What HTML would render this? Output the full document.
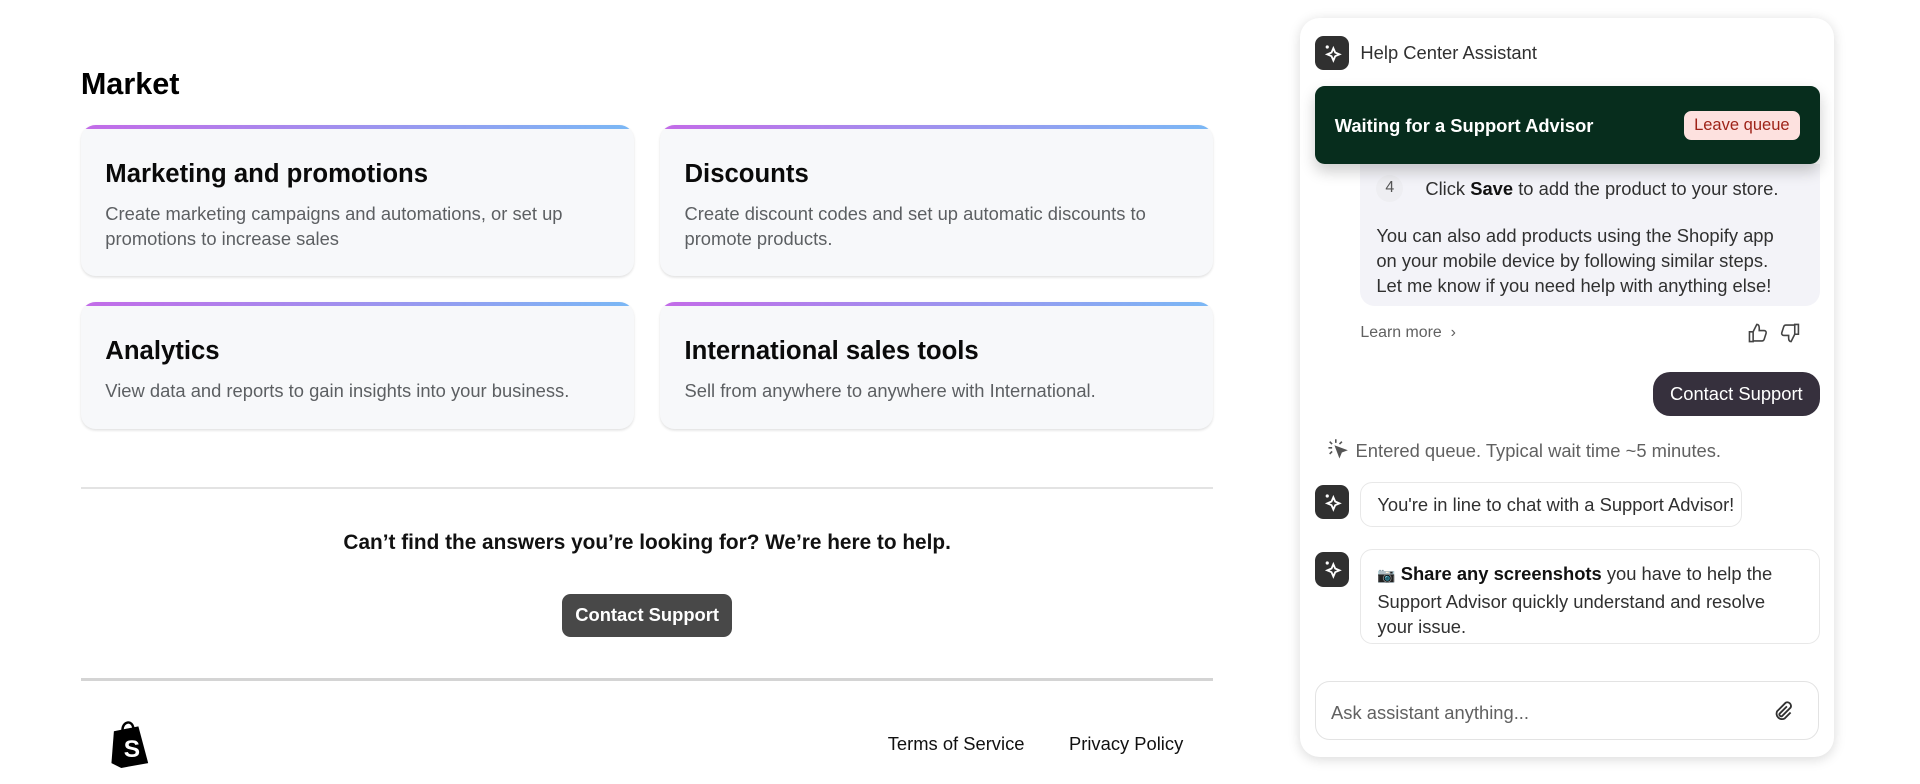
<!DOCTYPE html>
<html><head><meta charset="utf-8"><style>
html,body{margin:0;padding:0;background:#fff;overflow:hidden}
#w{width:1568px;height:640px;position:relative;zoom:1.2245;font-family:"Liberation Sans",sans-serif;color:#202223}
.a{position:absolute}
.card{position:absolute;background:#f7f8fa;border-radius:12px;box-shadow:0 1px 2px rgba(0,0,0,.12);overflow:hidden}
.card:before{content:"";position:absolute;left:0;right:0;top:0;height:3px;background:linear-gradient(90deg,#c36be8,#7ab8f5)}
.card h3{position:absolute;left:20px;margin:0;font-size:21px;font-weight:600;color:#0a0a0a}
.card p{position:absolute;left:20px;margin:0;font-size:15px;line-height:20.5px;color:#5c5f62;width:400px}
.ic{position:absolute;width:28px;height:28px;background:#303030;border-radius:7px}
.t15{font-size:15px;color:#303030}
</style></head><body><div id="w">
<div class="a" style="left:66px;top:55px;font-size:25px;font-weight:700;color:#000">Market</div>

<div class="card" style="left:66px;top:102px;width:452px;height:123px"><h3 style="top:29px">Marketing and promotions</h3><p style="top:62px">Create marketing campaigns and automations, or set up promotions to increase sales</p></div>
<div class="card" style="left:539px;top:102px;width:452px;height:123px"><h3 style="top:29px">Discounts</h3><p style="top:62px">Create discount codes and set up automatic discounts to promote products.</p></div>
<div class="card" style="left:66px;top:247px;width:452px;height:103px"><h3 style="top:28px">Analytics</h3><p style="top:62px">View data and reports to gain insights into your business.</p></div>
<div class="card" style="left:539px;top:247px;width:452px;height:103px"><h3 style="top:28px">International sales tools</h3><p style="top:62px">Sell from anywhere to anywhere with International.</p></div>

<div class="a" style="left:66px;top:398px;width:925px;height:1px;background:#e3e3e3"></div>
<div class="a" style="left:66px;top:434px;width:925px;text-align:center;font-size:17px;font-weight:700;color:#111">Can’t find the answers you’re looking for? We’re here to help.</div>
<div class="a" style="left:459px;top:485px;width:139px;height:35px;background:#484848;border-radius:7px;color:#fff;font-size:15px;font-weight:700;line-height:35px;text-align:center">Contact Support</div>
<div class="a" style="left:66px;top:554px;width:925px;height:2px;background:#d4d4d4"></div>
<svg class="a" style="left:89px;top:587px" width="34" height="40" viewBox="0 0 34 40"><path d="M4 10 L24 6 L32 36 L10 40 L2 36 Z" fill="#000"/><path d="M11 9 C11 2 19 0 20 8" stroke="#000" stroke-width="2" fill="none"/><text x="12" y="31" font-family="Liberation Sans" font-weight="700" font-size="20" fill="#fff">S</text></svg>
<div class="a" style="left:725px;top:599px;font-size:15px;color:#111">Terms of Service</div>
<div class="a" style="left:873px;top:599px;font-size:15px;color:#111">Privacy Policy</div>

<!-- panel -->
<div class="a" style="left:1062px;top:15px;width:436px;height:603px;border-radius:16px;background:#fff;box-shadow:0 2px 10px rgba(0,0,0,.15)"></div>
<div class="ic" style="left:1074px;top:29px"><svg width="28" height="28"><path d="M15 10 l1.5 3.5 3.5 1.5-3.5 1.5-1.5 3.5-1.5-3.5-3.5-1.5 3.5-1.5z" fill="none" stroke="#fff" stroke-width="1.5"/><circle cx="10" cy="9" r="1.3" fill="#fff"/></svg></div>
<div class="a t15" style="left:1111px;top:34px">Help Center Assistant</div>

<div class="a" style="left:1111px;top:134px;width:375px;height:116px;background:#f3f3f8;border-radius:0 0 12px 12px"></div>
<div class="a" style="left:1124px;top:143px;width:22px;height:22px;border-radius:11px;background:#eeeef2;font-size:13px;color:#555;text-align:center;line-height:22px">4</div>
<div class="a t15" style="left:1164px;top:145px">Click <b style="color:#111">Save</b> to add the product to your store.</div>
<div class="a t15" style="left:1124px;top:182px;line-height:20.5px;width:335px">You can also add products using the Shopify app on your mobile device by following similar steps. Let me know if you need help with anything else!</div>

<div class="a" style="left:1074px;top:70px;width:412px;height:64px;background:#072d1d;border-radius:8px;box-shadow:0 6px 12px rgba(0,0,0,.2)"></div>
<div class="a" style="left:1090px;top:94px;font-size:15px;font-weight:700;color:#fff">Waiting for a Support Advisor</div>
<div class="a" style="left:1375px;top:91px;width:95px;height:23px;background:#fde1df;border-radius:6px;color:#9e2318;font-size:13.5px;line-height:23px;text-align:center">Leave queue</div>

<div class="a" style="left:1111px;top:265px;font-size:13px;color:#616161">Learn more &nbsp;›</div>
<svg class="a" style="left:1427px;top:263px" width="44" height="18" viewBox="0 0 44 18" fill="none" stroke="#444" stroke-width="1.3"><path d="M2 8h3v8H2zM5 8l3-6c2 0 2 2 2 3v2h4c1 0 2 1 1.6 2.2l-1.6 5c-.3.8-1 1.3-1.8 1.3H5"/><path d="M42 10h-3V2h3zM39 10l-3 6c-2 0-2-2-2-3v-2h-4c-1 0-2-1-1.6-2.2l1.6-5c.3-.8 1-1.3 1.8-1.3H39"/></svg>

<div class="a" style="left:1350px;top:304px;width:136px;height:36px;background:#36303d;border-radius:14px;color:#fff;font-size:15px;line-height:36px;text-align:center">Contact Support</div>

<svg class="a" style="left:1083px;top:358px" width="20" height="18" viewBox="0 0 20 18" stroke="#555" stroke-width="1.3" fill="#555"><path d="M8 1v3M3 3l2 2M13 3l-2 2M2 8h3M3 13l2-2" fill="none"/><path d="M8 7l8 3-3.5 1.3L11 15z"/></svg>
<div class="a" style="left:1107px;top:359px;font-size:15px;color:#616161">Entered queue. Typical wait time ~5 minutes.</div>

<div class="ic" style="left:1074px;top:396px"><svg width="28" height="28"><path d="M15 10 l1.5 3.5 3.5 1.5-3.5 1.5-1.5 3.5-1.5-3.5-3.5-1.5 3.5-1.5z" fill="none" stroke="#fff" stroke-width="1.5"/><circle cx="10" cy="9" r="1.3" fill="#fff"/></svg></div>
<div class="a t15" style="left:1111px;top:394px;width:312px;height:36px;border:1px solid #e8e8e8;border-radius:10px;padding-left:13px;line-height:36px;box-sizing:border-box;white-space:nowrap">You're in line to chat with a Support Advisor!</div>
<div class="ic" style="left:1074px;top:451px"><svg width="28" height="28"><path d="M15 10 l1.5 3.5 3.5 1.5-3.5 1.5-1.5 3.5-1.5-3.5-3.5-1.5 3.5-1.5z" fill="none" stroke="#fff" stroke-width="1.5"/><circle cx="10" cy="9" r="1.3" fill="#fff"/></svg></div>
<div class="a t15" style="left:1111px;top:448px;width:375px;height:78px;border:1px solid #e8e8e8;border-radius:10px;padding:9px 24px 0 13px;box-sizing:border-box;line-height:20.5px"><span style="font-size:12px">📷</span> <b style="color:#111">Share any screenshots</b> you have to help the Support Advisor quickly understand and resolve your issue.</div>

<div class="a" style="left:1074px;top:556px;width:410px;height:47px;border:1px solid #e3e3e3;border-radius:12px"></div>
<div class="a" style="left:1087px;top:573px;font-size:15px;color:#616161">Ask assistant anything...</div>
<svg class="a" style="left:1446px;top:571px" width="20" height="20" viewBox="0 0 20 20" fill="none" stroke="#303030" stroke-width="1.5"><path d="M13 6l-6 6a1.5 1.5 0 0 0 2 2l7-7a3 3 0 0 0-4-4l-7 7a4.5 4.5 0 0 0 6 6l5-5"/></svg>
</div></body></html>
